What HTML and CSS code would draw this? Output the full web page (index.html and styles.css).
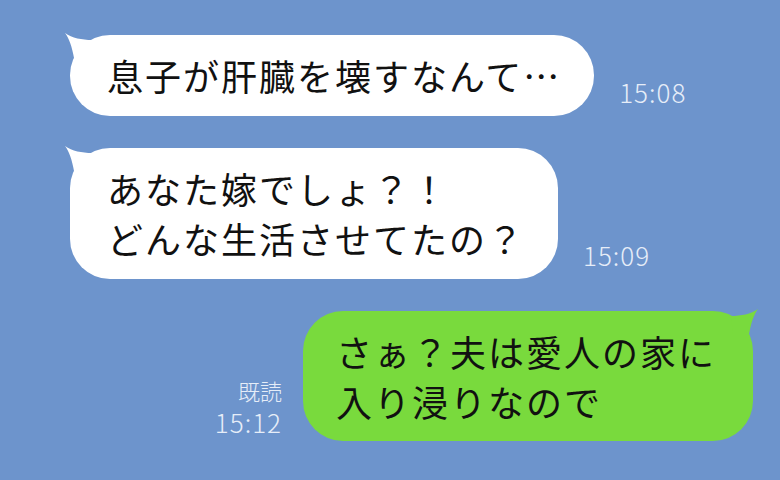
FILE: index.html
```html
<!DOCTYPE html>
<html lang="ja">
<head>
  <meta charset="UTF-8" />
  <meta name="viewport" content="width=device-width, initial-scale=1.0"/>
  <title>トーク</title>
  <link rel="stylesheet" href="styles.css">
</head>
<body>

  <div class="chat">
    <div class="row">
      <div class="bubble bubble-in">
        <svg class="tail tail-in" viewBox="0 0 40 40" width="40" height="40"><path d="M1 1 C5 6 8 15 10 26 L26 26 L28 8 C18 8 8 6 1 1 Z"/></svg>
        息子が肝臓を壊すなんて…
      </div>
      <div class="meta">
        <span class="time">15:08</span>
      </div>
    </div>

    <div class="row">
      <div class="bubble bubble-in">
        <svg class="tail tail-in" viewBox="0 0 40 40" width="40" height="40"><path d="M1 1 C5 6 8 15 10 26 L26 26 L28 8 C18 8 8 6 1 1 Z"/></svg>
        あなた嫁でしょ？！<br>どんな生活させてたの？
      </div>
      <div class="meta">
        <span class="time">15:09</span>
      </div>
    </div>

    <div class="row row-out">
      <div class="meta meta-out">
        <span class="read">既読</span>
        <span class="time">15:12</span>
      </div>
      <div class="bubble bubble-out">
        <svg class="tail tail-out" viewBox="0 0 40 40" width="40" height="40"><path d="M39 1 C35 6 32 15 30 26 L14 26 L12 8 C22 8 32 6 39 1 Z"/></svg>
        さぁ？夫は愛人の家に<br>入り浸りなので
      </div>
    </div>
  </div>

</body>
</html>
```

FILE: styles.css
```css
body {
  margin: 0;
  padding: 0;
  width: 780px;
  height: 480px;
  overflow: hidden;
  background-color: #6d94cc;
  font-family: "Noto Sans CJK JP", sans-serif;
  color: #111;
}

.chat {
  display: flex;
  flex-direction: column;
  gap: 32px;
  padding: 35px 27px 0 70px;
}

.row {
  display: flex;
  flex-direction: row;
  align-items: flex-end;
}

.row-out {
  justify-content: flex-end;
}

.bubble {
  position: relative;
  font-size: 36px;
  line-height: 50px;
  letter-spacing: 2px;
  border-radius: 40px;
  white-space: nowrap;
}

.bubble-in {
  background-color: #fff;
  padding: 15px 33px 16px 37px;
}

.bubble-out {
  background-color: #79da3d;
  padding: 15px 37px 15px 33px;
}

.tail {
  position: absolute;
  top: -3px;
}

.tail-in {
  left: -6px;
  fill: #fff;
}

.tail-out {
  right: -6px;
  fill: #79da3d;
}

.meta {
  display: flex;
  flex-direction: column;
  margin: 0 0 10px 25px;
  color: #e6edf8;
  font-weight: 300;
}

.meta-out {
  align-items: flex-end;
  gap: 6px;
  margin: 0 21px 5px 0;
}

.time {
  font-size: 26px;
  line-height: 28px;
  letter-spacing: 1px;
}

.read {
  font-size: 22px;
  line-height: 24px;
}
```
